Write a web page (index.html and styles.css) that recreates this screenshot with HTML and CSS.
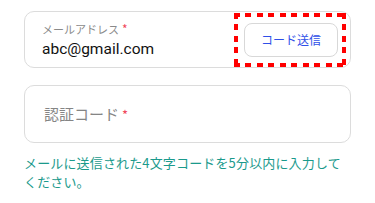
FILE: index.html
```html
<!DOCTYPE html>
<html lang="ja">
<head>
<meta charset="utf-8">
<link rel="stylesheet" href="styles.css">
</head>
<body>
<div class="form">
  <div class="field field-email">
    <div class="field-main">
      <div class="label">メールアドレス<span class="req">*</span></div>
      <div class="value">abc@gmail.com</div>
    </div>
    <div class="highlight">
      <button class="send-btn" type="button">コード送信</button>
    </div>
  </div>
  <div class="field field-code">
    <div class="placeholder">認証コード<span class="req">*</span></div>
  </div>
  <p class="hint">メールに送信された4文字コードを5分以内に入力してください。</p>
</div>
</body>
</html>
```
FILE: styles.css
```css
html, body {
  margin: 0;
  padding: 0;
  background: #ffffff;
}
body {
  font-family: Roboto, "Noto Sans CJK JP", sans-serif;
}
.form {
  padding: 11px 24px 0 24px;
  display: flex;
  flex-direction: column;
}
.field {
  box-sizing: border-box;
  border: 1px solid #dcdcdc;
  border-radius: 10px;
  display: flex;
  align-items: center;
}
.field-email {
  height: 57px;
}
.field-main {
  flex: 1;
  padding-left: 17px;
  display: flex;
  flex-direction: column;
}
.label {
  font-family: "Noto Sans CJK JP", sans-serif;
  font-size: 11px;
  color: #8a8a8a;
  line-height: 14px;
  margin-top: 2px;
}
.req {
  color: #f0475a;
  margin-left: 3px;
  font-size: 12px;
}
.value {
  font-size: 15.5px;
  color: #111;
  line-height: 22px;
  margin-top: 2px;
}
.highlight {
  box-sizing: border-box;
  width: 112px;
  height: 54px;
  margin-right: 4px;
  padding-left: 10px;
  display: flex;
  align-items: center;
  background:
    repeating-linear-gradient(90deg, #ff0000 0 6px, transparent 6px 11.5px) left top / 100% 4px no-repeat,
    repeating-linear-gradient(90deg, #ff0000 0 6px, transparent 6px 11.5px) left bottom / 100% 4px no-repeat,
    repeating-linear-gradient(180deg, #ff0000 0 6px, transparent 6px 11.5px) left top / 4px 100% no-repeat,
    repeating-linear-gradient(180deg, #ff0000 0 6px, transparent 6px 11.5px) right top / 4px 100% no-repeat;
}
.send-btn {
  box-sizing: border-box;
  width: 94px;
  height: 34px;
  border: 1px solid #d8d8d8;
  border-radius: 8px;
  background: #fff;
  color: #2f4fe8;
  font-family: "Noto Sans CJK JP", sans-serif;
  font-size: 12px;
  padding: 0;
}
.field-code {
  height: 58px;
  margin-top: 17px;
  padding-left: 19px;
}
.placeholder {
  font-family: "Noto Sans CJK JP", sans-serif;
  font-size: 15px;
  color: #858585;
  margin-top: -2px;
}
.placeholder .req {
  font-size: 13px;
}
.hint {
  margin: 10px 0 0 0;
  font-family: "Noto Sans CJK JP", sans-serif;
  font-size: 13px;
  letter-spacing: 0.15px;
  line-height: 19px;
  color: #1b9a8c;
  padding-right: 8px;
}
```
